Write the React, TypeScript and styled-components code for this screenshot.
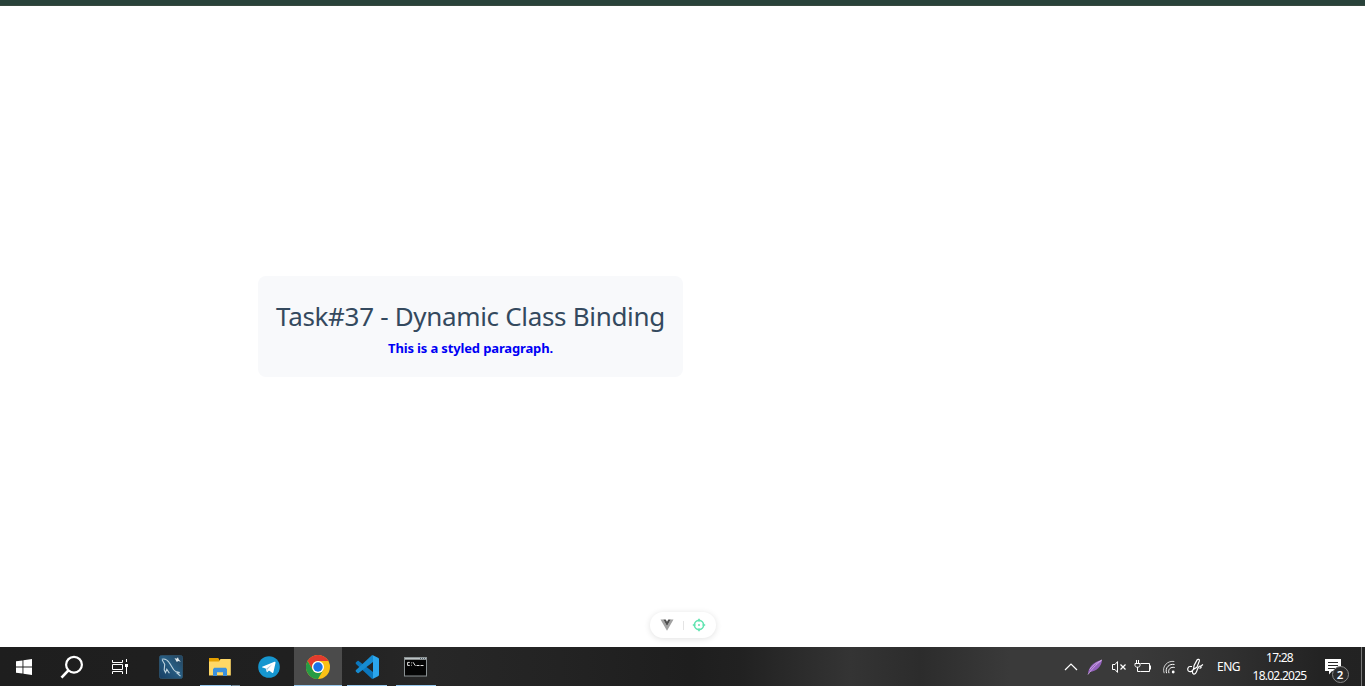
import React from "react";
import styled, { createGlobalStyle, css } from "styled-components";

const GlobalStyle = createGlobalStyle`
  * { box-sizing: border-box; }
  body { margin: 0; background: #fff; font-family: "Noto Sans", "Open Sans", sans-serif; overflow: hidden; }
  h1, p { margin: 0; }
  svg { display: block; flex: none; }
`;

const Screen = styled.div`
  height: 686px;
  display: flex;
  flex-direction: column;
  position: relative;
`;

const BrowserEdge = styled.div`
  height: 6px;
  flex: none;
  background: #29423a;
  border-bottom: 1px solid #38493f;
`;

const Page = styled.main`
  flex: 1;
  display: flex;
  align-items: center;
  padding-left: 258px;
`;

const Card = styled.section`
  width: 425px;
  height: 101px;
  border-radius: 8px;
  background: #f8f9fb;
  display: flex;
  flex-direction: column;
  align-items: center;
  padding-top: 21px;
`;

const Title = styled.h1`
  font-size: 26px;
  line-height: 38px;
  font-weight: 400;
  white-space: nowrap;
  color: #34495e;
  letter-spacing: -0.32px;
`;

const StyledParagraph = styled.p`
  font-size: 13px;
  line-height: 20px;
  margin-top: 3px;
  font-weight: 700;
  white-space: nowrap;
  color: #0000f5;
  letter-spacing: -0.14px;
`;

const DevTools = styled.div`
  position: absolute;
  left: 650px;
  top: 612px;
  width: 66px;
  height: 26px;
  border-radius: 13px;
  background: #fff;
  box-shadow: 0 1px 6px rgba(0, 0, 0, 0.12);
  display: flex;
  align-items: center;
  padding-left: 10px;
`;

const DevDivider = styled.span`
  width: 1px;
  height: 9px;
  background: #e4e4e4;
  margin: 0 8px 0 9px;
`;

const Taskbar = styled.footer`
  height: 39px;
  flex: none;
  display: flex;
  color: #fff;
  background: linear-gradient(90deg, #1e1e1e 0, #202020 290px, #272727 430px, #232323 560px, #1e1e1e 690px, #212121 740px, #343434 850px, #2c2c2c 920px, #3a3a3a 1010px, #3a3a3a 1130px, #303030 1230px, #232323 1320px, #222 1365px);
`;

const SystemButton = styled.div`
  width: 48px;
  height: 39px;
  display: flex;
  align-items: center;
  justify-content: center;
`;

const AppSlots = styled.div`
  display: grid;
  grid-template-columns: repeat(6, 49px);
  margin-left: 2px;
`;

const AppSlot = styled.div<{ $running?: boolean; $active?: boolean; $stacked?: boolean }>`
  height: 39px;
  display: flex;
  flex-direction: column;
  align-items: center;
  justify-content: space-between;
  padding-top: 7px;
  ${(p) => p.$active && css`background: #4b4b4b; width: 48px; margin-left: 1px;`}
  &::after {
    content: "";
    height: 1px;
    width: ${(p) => (p.$active ? "48px" : "40px")};
    background: ${(p) =>
      p.$stacked
        ? "linear-gradient(90deg, #98c9ee 31px, #445868 31px, #445868 32px, #71899b 32px)"
        : p.$running
        ? "#98c9ee"
        : "transparent"};
  }
`;

const IconBox = styled.span`
  height: 25px;
  display: flex;
  align-items: center;
`;

const Tray = styled.div`
  margin-left: auto;
  display: grid;
  grid-template-columns: 24px 24px 23px 26px 25px 28px 39px 63px 47px 7px;
  align-items: center;
  justify-items: center;
`;

const Language = styled.span`
  font-size: 12px;
  line-height: 16px;
  letter-spacing: -0.5px;
`;

const Clock = styled.div`
  height: 39px;
  padding-top: 2px;
  display: flex;
  flex-direction: column;
  align-items: center;
  font-size: 12px;
  line-height: 18px;
  letter-spacing: -0.75px;
`;

const Notifications = styled.div`
  position: relative;
  width: 28px;
  height: 39px;
`;

const NotificationIcon = styled.svg`
  position: absolute;
  left: 4px;
  top: 12px;
`;

const Badge = styled.span`
  position: absolute;
  left: 11px;
  top: 19px;
  width: 17px;
  height: 17px;
  border: 1px solid #888;
  border-radius: 50%;
  background: #2b2b2b;
  font-size: 11.5px;
  font-weight: 600;
  line-height: 15px;
  text-align: center;
`;

const DesktopEdge = styled.span`
  justify-self: start;
  margin-left: 3px;
  width: 1px;
  height: 39px;
  background: #777;
`;

const WindowsIcon = () => (
  <svg width="16" height="16" viewBox="0 0 16 16" fill="#fff">
    <path d="M0 2.3 6.5 1.4V7.5H0zM7.4 1.2 16 0V7.5H7.4zM0 8.4H6.5V14.6L0 13.7zM7.4 8.4H16V16L7.4 14.8z" />
  </svg>
);

const SearchIcon = () => (
  <svg width="24" height="24" viewBox="0 0 24 24" fill="none" stroke="#fff" strokeWidth="2.2">
    <circle cx="14" cy="9.7" r="7.9" />
    <path d="M8.4 15.4 1.5 22.6" strokeWidth="2.7" />
  </svg>
);

const TaskViewIcon = () => (
  <svg width="17" height="16" viewBox="0 0 17 16" fill="none" stroke="#fff">
    <path d="M.5 1v2.5h10V1M.5 15v-2.5h10V15M.5 5.5h10v5H.5zM14.5 0v3M14.5 8v7" />
    <path d="M13 5h3v3h-3z" fill="#fff" stroke="none" />
  </svg>
);

const WorkbenchIcon = () => (
  <svg width="24" height="24" viewBox="0 0 24 24">
    <defs>
      <linearGradient id="workbench" x1="0" y1="1" x2="1" y2="0">
        <stop stopColor="#173f65" />
        <stop offset=".55" stopColor="#285d82" />
        <stop offset="1" stopColor="#24425a" />
      </linearGradient>
    </defs>
    <rect x=".4" y=".4" width="23.2" height="23.2" rx="2.2" fill="url(#workbench)" stroke="#315a77" strokeWidth=".7" />
    <path d="M2.8 4.3c3-1.1 5.4.5 7.2 3 3.2 4 3.8 8.2 6.7 9.3l4 1-2.5.6 3.3 3M3.2 5l2.5 4.3-.5 5.6 1.3 2.7 1.3-3.3 2.6 4" fill="none" stroke="#bfd4df" strokeWidth="1.1" />
    <path d="m15.5 3 2 .8L19 2.2l.6 2 2.2 2.6-2.5-.9-1.5 1z" fill="#e5edf0" />
  </svg>
);

const FolderIcon = () => (
  <svg width="22" height="18" viewBox="0 0 22 18">
    <path d="M0 0h9.3l1.4 2.5V4H0z" fill="#e5a000" />
    <path d="M0 3.4h10L11.5 1H21.8v16.4H0z" fill="#ffd866" />
    <path d="M4 18v-6.8L5.2 9.8h11.7l1.1 1.4V18h-4v-3.8H8V18z" fill="#3c91dc" />
  </svg>
);

const TelegramIcon = () => (
  <svg width="22" height="22" viewBox="0 0 22 22">
    <circle cx="11" cy="11" r="10.8" fill="#1696cf" />
    <path d="m4.2 10.8 12.3-5c.7-.2 1.2.2 1 1.1l-2.1 9.4c-.2.7-.7.8-1.3.4l-3.1-2.3-1.6 1.7c-.4.4-.6.2-.7-.3l-1-3.3-3.2-1c-.7-.2-.8-.5-.3-.7z" fill="#fff" />
    <path d="m8.2 12.7 6.1-4.5-4.8 5.2-.2 2z" fill="#a9c9dd" />
  </svg>
);

const ChromeIcon = () => (
  <svg width="24" height="24" viewBox="0 0 24 24">
    <circle cx="12" cy="12" r="12" fill="#fbc116" />
    <path d="M1.6 6A12 12 0 0 1 22.4 6H12a6 6 0 0 0-5.2 9z" fill="#e33b2e" />
    <path d="M1.6 6A12 12 0 0 0 12 24l5.2-9a6 6 0 0 1-10.4 0z" fill="#269b45" />
    <circle cx="12" cy="12" r="6" fill="#fff" />
    <circle cx="12" cy="12" r="4.7" fill="#1a73e8" />
  </svg>
);

const CodeIcon = () => (
  <svg width="24" height="24" viewBox="0 0 24 24">
    <path d="M1 7.3 2.5 6c.4-.3.8-.3 1.2 0L18 17v6.7c-.5.3-1 .2-1.4-.2L1 9c-.5-.5-.5-1.2 0-1.7z" fill="#0b77bd" />
    <path d="M1 16.7 2.5 18c.4.3.8.3 1.2 0L18 7V.3c-.5-.3-1-.2-1.4.2L1 15c-.5.5-.5 1.2 0 1.7z" fill="#168bd0" />
    <path d="M18 .3 23 2.7c.6.3 1 .8 1 1.5v15.6c0 .7-.4 1.2-1 1.5l-5 2.4c-.5.2-1 .1-1.4-.2.6.4 1.4 0 1.4-.8V1.3c0-.8-.8-1.2-1.4-.8.4-.3.9-.4 1.4-.2z" fill="#2ba6ed" />
  </svg>
);

const TerminalIcon = () => (
  <svg width="23" height="20" viewBox="0 0 23 20">
    <rect x=".5" y=".5" width="22" height="18.5" fill="#050505" stroke="#8a9193" />
    <path d="M1 1h21v1.7H1z" fill="#bcc3c5" />
    <path d="M16 1.5h1M18 1.5h1M20 1.5h1" stroke="#50606a" />
    <path d="M5.8 5.4H3.6v3h2.2M7.5 5.5v.8M7.5 7.8v.8M9 5.2l2.4 3.6M12.5 8.5h3M16.5 8.5h3" fill="none" stroke="#e5e5e5" strokeWidth="1" />
  </svg>
);

const ChevronIcon = () => (
  <svg width="14" height="8" viewBox="0 0 14 8" fill="none" stroke="#fff" strokeWidth="1.2">
    <path d="M1 7 7 1l6 6" />
  </svg>
);

const FeatherIcon = () => (
  <svg width="16" height="16" viewBox="0 0 16 16">
    <path d="M1 15.3C1.3 8.4 6 3 15 .8 14.8 7.6 9 12.6 3 13z" fill="#9360bd" />
    <path d="M1 15.5C5 10 8 6.6 15 .8M2.7 10.5C6 6 9 4 14 1.7" fill="none" stroke="#d8b4ea" strokeWidth=".8" />
  </svg>
);

const MutedIcon = () => (
  <svg width="16" height="14" viewBox="0 0 16 14" fill="none" stroke="#fff">
    <path d="M1.5 4.5H4L6.5 1.6v10.8L4 9.5H1.5z" />
    <path d="m9.5 4.5 5 5m0-5-5 5" strokeWidth="1.2" />
  </svg>
);

const BatteryIcon = () => (
  <svg width="18" height="13" viewBox="0 0 18 13" fill="none" stroke="#fff">
    <path d="M6.5 3.5h9v8h-9M16.5 5.5v4M2.5 0v3M4.5 0v3M1 3.5h5v2c0 1-1 1.7-2.5 1.7S1 6.5 1 5.5zM3.5 7v4.5h3" />
  </svg>
);

const WifiIcon = () => (
  <svg width="14" height="14" viewBox="0 0 14 14" fill="none" stroke="#fff" strokeWidth="1">
    <path d="M2.2 13.2C-.5 6 6 .3 12.3 1.5" opacity=".75" />
    <path d="M4.6 13.2C2.6 7.7 7.5 3.4 12.5 4.5" />
    <path d="M7 13.2C5.6 9.4 8.7 6.5 12.7 7.5" />
    <circle cx="11.2" cy="12" r="1.4" fill="#fff" stroke="none" />
  </svg>
);

const InkIcon = () => (
  <svg width="17" height="17" viewBox="0 0 17 17" fill="none" stroke="#fff" strokeWidth="1.2">
    <path d="m6.5 11.3.6-3.8 3-5.6c.7-1.2 2.7-.4 2.3 1L9.9 9.3z" />
    <path d="M5 8.5H3C.8 8.5.2 11.5 1.3 12.9c1.5 1.5 3.8.9 5.2-1.6M5.5 12.8c-.5 3.9 2.6 4.5 4 1 .9-2.4 2.1-6.6 4-5.5 1.2.8.3 2.2-1.1 1.7M13.8 8l2.2-1.5" />
  </svg>
);

const VueIcon = () => (
  <svg width="14" height="12" viewBox="0 0 14 12">
    <path d="M.5.5H3.3L7 7 10.7.5h2.8L7 11.7z" fill="#a2a2a2" />
    <path d="M3.3.5h2.4L7 2.8 8.3.5h2.4L7 7z" fill="#4f4f4f" />
  </svg>
);

const TargetIcon = () => (
  <svg width="14" height="14" viewBox="0 0 14 14" fill="none" stroke="#62e4b1" strokeWidth="1.6">
    <circle cx="7" cy="7" r="4.6" />
    <path d="M7 .8v2.7M7 10.5v2.7M.8 7h2.7M10.5 7h2.7" />
    <circle cx="7" cy="7" r="1" fill="#62e4b1" stroke="none" />
  </svg>
);

const MessageIcon = () => (
  <NotificationIcon width="17" height="16" viewBox="0 0 17 16">
    <path d="M0 0h16v12H7l-3 3.5V12H0z" fill="#fff" />
    <path d="M3 3.5h10M3 6.5h10M3 9.5h7" stroke="#292929" />
  </NotificationIcon>
);

export default function App() {
  return (
    <Screen>
      <GlobalStyle />
      <BrowserEdge />
      <Page>
        <Card>
          <Title>Task#37 - Dynamic Class Binding</Title>
          <StyledParagraph>This is a styled paragraph.</StyledParagraph>
        </Card>
      </Page>
      <DevTools>
        <VueIcon />
        <DevDivider />
        <TargetIcon />
      </DevTools>
      <Taskbar>
        <SystemButton><WindowsIcon /></SystemButton>
        <SystemButton><SearchIcon /></SystemButton>
        <SystemButton><TaskViewIcon /></SystemButton>
        <AppSlots>
          <AppSlot><IconBox><WorkbenchIcon /></IconBox></AppSlot>
          <AppSlot $running $stacked><IconBox><FolderIcon /></IconBox></AppSlot>
          <AppSlot><IconBox><TelegramIcon /></IconBox></AppSlot>
          <AppSlot $running $active><IconBox><ChromeIcon /></IconBox></AppSlot>
          <AppSlot $running><IconBox><CodeIcon /></IconBox></AppSlot>
          <AppSlot $running><IconBox><TerminalIcon /></IconBox></AppSlot>
        </AppSlots>
        <Tray>
          <ChevronIcon />
          <FeatherIcon />
          <MutedIcon />
          <BatteryIcon />
          <WifiIcon />
          <InkIcon />
          <Language>ENG</Language>
          <Clock>
            <span>17:28</span>
            <span>18.02.2025</span>
          </Clock>
          <Notifications>
            <MessageIcon />
            <Badge>2</Badge>
          </Notifications>
          <DesktopEdge />
        </Tray>
      </Taskbar>
    </Screen>
  );
}
